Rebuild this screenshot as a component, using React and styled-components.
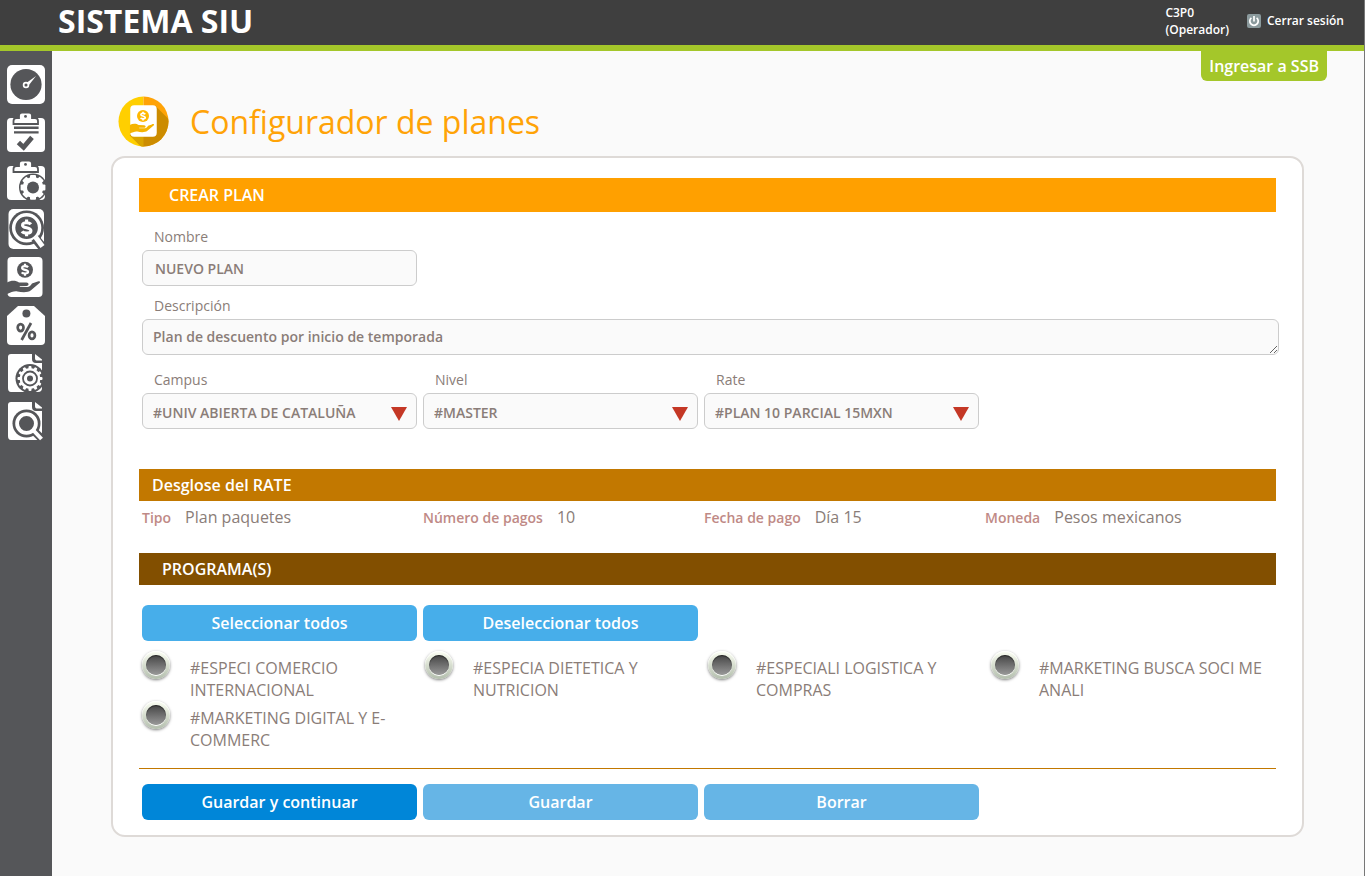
import React from 'react'
import styled, { createGlobalStyle } from 'styled-components'

const GlobalStyle = createGlobalStyle`
  * {
    box-sizing: border-box;
  }
  body {
    margin: 0;
    background: #fafafa;
    color: #8a7d78;
    font-family: "Open Sans", "Noto Sans", sans-serif;
    font-size: 16px;
  }
  input, select, textarea, button {
    font-family: inherit;
  }
`

const Page = styled.div`
  display: flex;
  flex-direction: column;
  min-height: 100vh;
  border-right: 1px solid #777777;
`

const Header = styled.header`
  display: flex;
  align-items: center;
  justify-content: space-between;
  height: 51px;
  padding: 0 20px 4px 58px;
  background: #3f3f3f;
  border-bottom: 6px solid #a4c72a;
  color: #fff;
`

const Brand = styled.div`
  font-size: 32px;
  font-weight: 700;
  line-height: 40px;
`

const Session = styled.div`
  display: flex;
  align-items: center;
  gap: 18px;
  font-size: 12px;
  font-weight: 600;
  line-height: 17px;
`

const Logout = styled.a`
  display: flex;
  align-items: center;
  gap: 6px;
  color: #fff;
  text-decoration: none;
`

const Body = styled.div`
  display: flex;
  flex: 1;
`

const Sidebar = styled.nav`
  display: flex;
  flex-direction: column;
  gap: 8px;
  width: 52px;
  padding: 14px 6px;
  background: #555659;
`

const SideLink = styled.a`
  display: flex;
  height: 40px;
`

const Main = styled.main`
  flex: 1;
  padding: 0 60px 39px 59px;
`

const TabRow = styled.div`
  display: flex;
  justify-content: flex-end;
  margin-right: -23px;
`

const SsbLink = styled.a`
  height: 30px;
  padding: 0 8px;
  border-radius: 0 0 6px 6px;
  background: #a4c72a;
  color: #fff;
  font-size: 16px;
  font-weight: 600;
  line-height: 30px;
  text-decoration: none;
`

const TitleRow = styled.div`
  display: flex;
  align-items: center;
  gap: 21px;
  margin: 15px 0 9px;
  padding-left: 7px;
`

const Title = styled.h1`
  margin: 0;
  color: #ffa307;
  font-size: 32px;
  font-weight: 400;
  line-height: 50px;
`

const Card = styled.form`
  padding: 20px 26px 15px;
  border: 2px solid #dedad7;
  border-radius: 14px;
  background: #fff;
`

const Bar = styled.h2`
  margin: ${(props) => props.$top || 0}px 0 0;
  padding-left: ${(props) => props.$indent}px;
  background: ${(props) => props.$color};
  color: #fff;
  font-size: 16px;
  font-weight: 600;
  line-height: ${(props) => props.$height || 32}px;
`

const Columns = styled.div`
  display: grid;
  grid-template-columns: repeat(4, 1fr);
  gap: 6px;
  padding: 0 16px 0 3px;
  margin-top: ${(props) => props.$top}px;
`

const WideRow = styled.div`
  margin: 10px -3px 0 3px;
`

const Field = styled.div`
  display: flex;
  flex-direction: column;
  gap: 3px;
`

const Label = styled.label`
  padding-left: 12px;
  font-size: 14px;
  line-height: 20px;
`

const TextInput = styled.input`
  width: 100%;
  height: 36px;
  padding: 0 12px;
  border: 1px solid #cccccc;
  border-radius: 6px;
  background: #fafafa;
  color: #8a7d78;
  font-size: 14px;
  font-weight: 600;
`

const TextArea = styled.textarea`
  display: block;
  width: 100%;
  height: 36px;
  padding: 7px 10px;
  border: 1px solid #cccccc;
  border-radius: 6px;
  background: #fafafa;
  color: #8a7d78;
  font-size: 14px;
  font-weight: 600;
  line-height: 20px;
  overflow: hidden;
`

const SelectBox = styled.div`
  display: grid;
  align-items: center;

  & > * {
    grid-area: 1 / 1;
  }
  & > svg {
    justify-self: end;
    margin: 5px 10px 0 0;
    pointer-events: none;
  }
`

const Select = styled.select`
  appearance: none;
  width: 100%;
  height: 36px;
  padding: 2px 30px 0 10px;
  border: 1px solid #cccccc;
  border-radius: 6px;
  background: #fafafa;
  color: #8a7d78;
  font-size: 14px;
  font-weight: 600;
`

const RateList = styled.dl`
  display: grid;
  grid-template-columns: repeat(4, 1fr);
  grid-auto-rows: 32px;
  gap: 6px;
  margin: 0 0 20px;
  padding: 0 16px 0 3px;
`

const RateItem = styled.div`
  display: flex;
  align-items: baseline;
  gap: 14px;
  line-height: 32px;
  white-space: nowrap;
`

const RateName = styled.dt`
  color: #bf8a86;
  font-size: 14px;
  font-weight: 600;
`

const RateValue = styled.dd`
  margin: 0;
`

const Button = styled.button`
  height: 36px;
  border: 0;
  border-radius: 6px;
  background: ${(props) => props.$color};
  color: #fff;
  font-size: 16px;
  font-weight: 600;
  cursor: pointer;
`

const Programs = styled.div`
  display: grid;
  grid-template-columns: repeat(4, 1fr);
  margin: 10px 0 17px;
  padding: 0 2px 0 3px;
`

const Program = styled.label`
  display: flex;
  align-items: flex-start;
  gap: 20px;
  line-height: 22px;
`

const ProgramName = styled.span`
  flex: 1;
  padding-top: 6px;
`

const Knob = styled.input`
  appearance: none;
  display: grid;
  place-items: center;
  width: 28px;
  height: 28px;
  margin: 0;
  border-radius: 50%;
  background: linear-gradient(#fcfff4, #dfe5d7 40%, #b3bead);
  box-shadow: inset 0 1px 1px #fff, 0 1px 3px rgba(0, 0, 0, 0.5);
  cursor: pointer;

  &::before {
    content: "";
    width: 20px;
    height: 20px;
    border-radius: 50%;
    background: linear-gradient(#454545, #999999);
    box-shadow: inset 0 1px 1px rgba(0, 0, 0, 0.5), 0 1px 0 #fff;
  }
  &:checked::before {
    background: linear-gradient(#0086d8, #66b5e6);
  }
`

const Rule = styled.hr`
  height: 1px;
  margin: 0;
  border: 0;
  background: #c27800;
`

const DARK = '#555659'

const Gear = ({ cx, cy, r, fill, teeth = 8, size = 4 }) => (
  <g fill={fill}>
    <circle cx={cx} cy={cy} r={r} />
    {Array.from({ length: teeth }, (_, i) => (
      <rect
        key={i}
        x={cx - size / 2}
        y={cy - r - 2}
        width={size}
        height={4}
        rx="1"
        transform={`rotate(${(360 / teeth) * i} ${cx} ${cy})`}
      />
    ))}
  </g>
)

const Dollar = ({ cx, cy, fill, scale = 1 }) => (
  <g transform={`translate(${cx} ${cy}) scale(${scale})`} fill="none" stroke={fill} strokeWidth="2.6">
    <path d="M3.6 -3 C2.5 -4.4 -3.4 -5.2 -3.4 -2.2 C-3.4 0.6 3.6 -0.6 3.6 2.4 C3.6 5.2 -2.8 4.6 -3.8 3" />
    <path d="M0 -7 V-4 M0 4 V7" />
  </g>
)

const Hand = ({ fill }) => (
  <path
    fill={fill}
    d="M1 25.5 C5 23 10 23.2 13 25.4 L20.5 25.6 C23.5 26 23 29 20.5 29 L13.5 29.2 L14 30 H22 C24.5 29.5 25.4 27.3 26 26.5 L31 24.8 C32 23.7 35 24 33.8 25.7 L25 33.2 C22 35.8 16 35.4 11.5 34.4 C8 33.8 5 35.4 1 37 Z"
  />
)

const Clipboard = () => (
  <>
    <path fill="#fff" d="M5 5 H35 Q39 5 39 9 V35 Q39 39 35 39 H5 Q1 39 1 35 V9 Q1 5 5 5 Z" />
    <path fill="#fff" stroke={DARK} strokeWidth="1.8" d="M7.5 11 V8 Q7.5 5 10.5 5 H13 V2.5 Q13 -.4 16 -.4 H23 Q26 -.4 26 2.5 V5 H29 Q32 5 32 8 V11 Z" />
    <circle cx="19.5" cy="3.4" r="1.4" fill={DARK} />
  </>
)

const Folded = () => (
  <>
    <path fill="#fff" d="M5 1 H26 V6 Q26 10 30 10 H36 V35 Q36 39 32 39 H5 Q2 39 2 35 V4 Q2 1 5 1 Z" />
    <path fill="#fff" d="M29 1 L36 6.5 V7.6 H31.5 Q29 7.6 29 5 Z" />
  </>
)

const icons = [
  {
    name: 'Tablero',
    art: (
      <>
        <rect x="1" y="0" width="38" height="39" rx="5" fill="#fff" />
        <circle cx="20" cy="19.5" r="15.6" fill={DARK} />
        <circle cx="20" cy="20" r="2.4" fill="none" stroke="#fff" strokeWidth="1.7" />
        <path d="M21 17.5 L30 11 L23.2 19.8 Z" fill="#fff" />
      </>
    ),
  },
  {
    name: 'Tareas',
    art: (
      <>
        <Clipboard />
        <path d="M8 14.8 H32.6 M8 19.4 H32.6" stroke={DARK} strokeWidth="2.4" />
        <path d="M12.4 29.6 L17.6 34.4 L26 24.4" stroke={DARK} strokeWidth="4.8" fill="none" />
      </>
    ),
  },
  {
    name: 'Configurar tareas',
    art: (
      <>
        <Clipboard />
        <circle cx="27" cy="26.4" r="14" fill={DARK} />
        <Gear cx={27} cy={26.4} r={10.4} fill="#fff" size={6} />
        <circle cx="27" cy="26.4" r="6" fill={DARK} />
      </>
    ),
  },
  {
    name: 'Consultar pagos',
    art: (
      <>
        <rect x="2.5" y="0" width="35.5" height="40" rx="5" fill="#fff" />
        <circle cx="20.6" cy="18.8" r="17.4" fill={DARK} />
        <circle cx="20.6" cy="18.8" r="13" fill={DARK} stroke="#fff" strokeWidth="3.4" />
        <path d="M29 29 L38 40" stroke={DARK} strokeWidth="9" />
        <path d="M29.5 28 L36.5 37.5" stroke="#fff" strokeWidth="5" />
        <Dollar cx={20.6} cy={18.8} fill="#fff" scale={1.2} />
      </>
    ),
  },
  {
    name: 'Planes',
    art: (
      <>
        <rect x="1.5" y="0" width="35" height="40" rx="4" fill="#fff" />
        <circle cx="19" cy="12.8" r="8" fill={DARK} />
        <Dollar cx={19} cy={12.8} fill="#fff" scale={0.85} />
        <Hand fill={DARK} />
      </>
    ),
  },
  {
    name: 'Descuentos',
    art: (
      <>
        <path d="M12 1 H28 L39 11 V36 Q39 40 35 40 H5 Q1 40 1 36 V11 Z" fill="#fff" />
        <circle cx="20.4" cy="8.6" r="4" fill={DARK} />
        <g fill="none" stroke={DARK} strokeWidth="2.7">
          <ellipse cx="14.6" cy="22.6" rx="2.9" ry="3.5" />
          <ellipse cx="26" cy="30.4" rx="2.9" ry="3.5" />
          <path d="M25 18 L15.6 35" />
        </g>
      </>
    ),
  },
  {
    name: 'Configurar documentos',
    art: (
      <>
        <Folded />
        <circle cx="24" cy="25.5" r="14.5" fill={DARK} />
        <Gear cx={24} cy={25.5} r={10.5} fill="#fff" teeth={12} size={3} />
        <circle cx="24" cy="25.5" r="7" fill="#fff" stroke={DARK} strokeWidth="1.8" />
        <circle cx="24" cy="25.5" r="3" fill={DARK} />
      </>
    ),
  },
  {
    name: 'Consultar documentos',
    art: (
      <>
        <Folded />
        <circle cx="20.5" cy="22.5" r="14" fill={DARK} />
        <path d="M29 31 L38 40" stroke={DARK} strokeWidth="8" />
        <circle cx="20.5" cy="22.5" r="9.4" fill={DARK} stroke="#fff" strokeWidth="3.8" />
        <path d="M28 30 L35.5 38" stroke="#fff" strokeWidth="4" />
      </>
    ),
  },
]

const PlanBadge = () => (
  <svg width="51" height="51" viewBox="0 0 52 52" aria-hidden="true">
    <defs>
      <clipPath id="badge">
        <circle cx="26" cy="26" r="25.5" />
      </clipPath>
    </defs>
    <g clipPath="url(#badge)">
      <rect width="26" height="52" fill="#ffcf00" />
      <rect x="26" width="26" height="52" fill="#ffa307" />
      <path d="M38 10 L60 32 V60 H32 L12 40 Z" fill="#cc8c00" />
      <path d="M12 40 L26 54 V38 Z" fill="#d9a400" />
    </g>
    <rect x="12.5" y="9.5" width="27" height="32" rx="4" fill="#fff" />
    <svg x="12" y="9.5" width="27" height="32" viewBox="1 0 36 40">
      <circle cx="19" cy="13.2" r="8.2" fill="#ffb800" />
      <Dollar cx={19} cy={13.2} fill="#fff" scale={0.85} />
      <Hand fill="#f5b400" />
    </svg>
  </svg>
)

const PowerIcon = () => (
  <svg width="14" height="14" viewBox="0 0 14 14" aria-hidden="true">
    <rect width="14" height="14" rx="2" fill="#8b9a9d" />
    <path d="M4.4 3.8 A4.2 4.2 0 1 0 9.6 3.8" fill="none" stroke="#fff" strokeWidth="1.7" />
    <path d="M7 2 V7.5" stroke="#fff" strokeWidth="1.7" />
  </svg>
)

const selects = [
  { id: 'campus', label: 'Campus', value: '#UNIV ABIERTA DE CATALUÑA' },
  { id: 'nivel', label: 'Nivel', value: '#MASTER' },
  { id: 'rate', label: 'Rate', value: '#PLAN 10 PARCIAL 15MXN' },
]

const rate = [
  ['Tipo', 'Plan paquetes'],
  ['Número de pagos', '10'],
  ['Fecha de pago', 'Día 15'],
  ['Moneda', 'Pesos mexicanos'],
]

const programs = [
  '#ESPECI COMERCIO INTERNACIONAL',
  '#ESPECIA DIETETICA Y NUTRICION',
  '#ESPECIALI LOGISTICA Y COMPRAS',
  '#MARKETING BUSCA SOCI ME ANALI',
  '#MARKETING DIGITAL Y E-COMMERC',
]

const App = () => {
  const [selected, setSelected] = React.useState([])

  const toggle = (name) =>
    setSelected(selected.includes(name) ? selected.filter((p) => p !== name) : [...selected, name])

  return (
    <>
      <GlobalStyle />
      <Page>
        <Header>
          <Brand>SISTEMA SIU</Brand>
          <Session>
            <div>
              C3P0
              <br />
              (Operador)
            </div>
            <Logout href="#salir">
              <PowerIcon />
              Cerrar sesión
            </Logout>
          </Session>
        </Header>

        <Body>
          <Sidebar>
            {icons.map((icon) => (
              <SideLink key={icon.name} href="#menu" aria-label={icon.name}>
                <svg width="40" height="40" viewBox="0 0 40 40">{icon.art}</svg>
              </SideLink>
            ))}
          </Sidebar>

          <Main>
            <TabRow>
              <SsbLink href="#ssb">Ingresar a SSB</SsbLink>
            </TabRow>
            <TitleRow>
              <PlanBadge />
              <Title>Configurador de planes</Title>
            </TitleRow>

            <Card onSubmit={(e) => e.preventDefault()}>
              <Bar $color="#ffa000" $indent={30} $height={34}>CREAR PLAN</Bar>
              <Columns $top={15}>
                <Field>
                  <Label htmlFor="nombre">Nombre</Label>
                  <TextInput id="nombre" defaultValue="NUEVO PLAN" />
                </Field>
              </Columns>
              <WideRow>
                <Field>
                  <Label htmlFor="descripcion">Descripción</Label>
                  <TextArea id="descripcion" rows="1" defaultValue="Plan de descuento por inicio de temporada" />
                </Field>
              </WideRow>
              <Columns $top={15}>
                {selects.map((item) => (
                  <Field key={item.id}>
                    <Label htmlFor={item.id}>{item.label}</Label>
                    <SelectBox>
                      <Select id={item.id}>
                        <option>{item.value}</option>
                      </Select>
                      <svg width="16" height="14" viewBox="0 0 16 14" aria-hidden="true">
                        <path d="M0 0 H16 L8 14 Z" fill="#c43725" />
                      </svg>
                    </SelectBox>
                  </Field>
                ))}
              </Columns>

              <Bar $color="#c27800" $indent={13} $top={40}>Desglose del RATE</Bar>
              <RateList>
                {rate.map(([name, value]) => (
                  <RateItem key={name}>
                    <RateName>{name}</RateName>
                    <RateValue>{value}</RateValue>
                  </RateItem>
                ))}
              </RateList>

              <Bar $color="#824f00" $indent={23}>PROGRAMA(S)</Bar>
              <Columns $top={20}>
                <Button type="button" $color="#47aeea" onClick={() => setSelected(programs)}>
                  Seleccionar todos
                </Button>
                <Button type="button" $color="#47aeea" onClick={() => setSelected([])}>
                  Deseleccionar todos
                </Button>
              </Columns>
              <Programs>
                {programs.map((name) => (
                  <Program key={name}>
                    <Knob type="checkbox" checked={selected.includes(name)} onChange={() => toggle(name)} />
                    <ProgramName>{name}</ProgramName>
                  </Program>
                ))}
              </Programs>

              <Rule />
              <Columns $top={15}>
                <Button type="submit" $color="#0086d8">Guardar y continuar</Button>
                <Button type="button" $color="#66b5e6">Guardar</Button>
                <Button type="reset" $color="#66b5e6">Borrar</Button>
              </Columns>
            </Card>
          </Main>
        </Body>
      </Page>
    </>
  )
}

export default App
